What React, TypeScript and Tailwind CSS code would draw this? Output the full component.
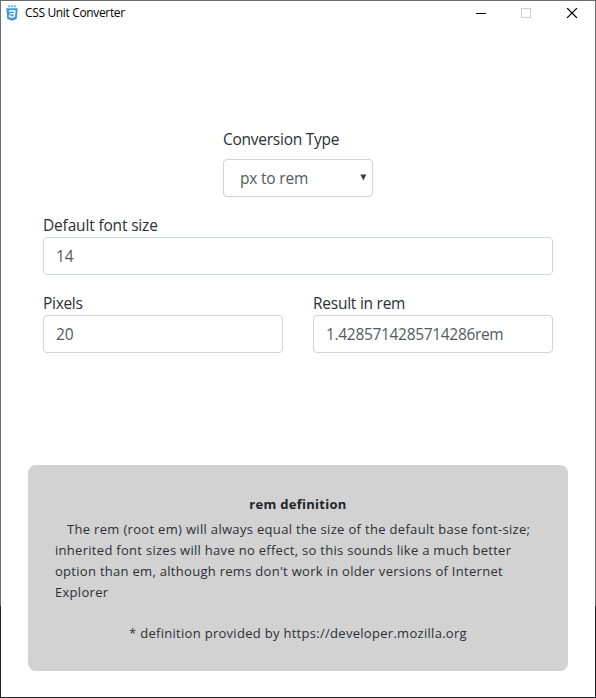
import React from "react";

const field =
  "block h-[38px] w-full rounded border border-[#ced4da] bg-white px-3 text-[15.5px] text-[#535a61] outline-none";
const label = "block h-6 text-[15.5px] leading-[25px] whitespace-nowrap";

function SideBorder() {
  return (
    <div className="flex w-px shrink-0 flex-col">
      <div className="h-[605px] bg-[#707070]" />
      <div className="flex-1 bg-[#222224]" />
    </div>
  );
}

function CssLogo() {
  return (
    <svg width="12" height="16" viewBox="0 0 12 16" className="mb-[2px] shrink-0">
      <path d="M2 0.3h2.2v2H2zM5 0.3h2.2v2H5zM8 0.3h2.2v2H8z" fill="#6cb6e4" />
      <path d="M0.3 3.2h11.4l-1 10.8L6 15.8l-4.7-1.8z" fill="#3b9bdc" />
      <path d="M3 6h5.8l-.5 5.3L6 12.3l-2.4-.9-.1-1.3M3.8 8.8h4.7" fill="none" stroke="#fff" strokeWidth="1.4" />
    </svg>
  );
}

function TitleBar() {
  return (
    <header className="flex h-[25px] items-center pl-[5px] text-black">
      <CssLogo />
      <span className="mb-[2px] ml-[7px] text-[12px] leading-4 tracking-[-0.35px] whitespace-nowrap">
        CSS Unit Converter
      </span>
      <div className="ml-auto flex pr-[16px] pb-[2px]">
        <svg width="103" height="12" viewBox="0 0 103 12" fill="none" shapeRendering="crispEdges">
          <path d="M0 6.5h10" stroke="#000" />
          <rect x="45.5" y="1.5" width="9" height="9" stroke="#ccc" />
          <path d="M91.5 1.5l9 9M100.5 1.5l-9 9" stroke="#000" strokeWidth="1.2" strokeLinecap="square" shapeRendering="auto" />
        </svg>
      </div>
    </header>
  );
}

export default function App() {
  return (
    <div className="flex h-[698px] w-[596px] flex-col overflow-hidden bg-white font-['Open_Sans',sans-serif] text-[#2c3034]">
      <div className="h-px shrink-0 bg-[#6d6a6d]" />
      <div className="flex min-h-0 flex-1">
        <SideBorder />
        <div className="flex flex-1 flex-col">
          <TitleBar />
          <main className="px-[27px] pt-[101px]">
            <form className="px-[15px]">
              <div className="mx-auto w-[150px]">
                <label className={label}>
                  <span className="tracking-[-0.25px]">Conversion Type</span>
                </label>
                <div className="mt-2 flex h-[38px] items-center justify-between rounded border border-[#ced4da] pr-[5px] pl-4 text-[15.5px] tracking-[-0.2px] text-[#535a61]">
                  <span className="pt-[2px]">px to rem</span>
                  <svg width="7" height="7" viewBox="0 0 7 7" className="mb-px">
                    <path d="M0.3 0.5h6L3.4 6.5z" fill="#343a40" />
                  </svg>
                </div>
              </div>
              <div className="mt-4">
                <label className={label}>
                  <span className="tracking-[-0.17px]">Default font size</span>
                </label>
                <input className={field} defaultValue="14" />
              </div>
              <div className="mt-4 flex gap-[30px]">
                <div className="flex-1">
                  <label className={label}>
                    <span className="tracking-[-0.3px]">Pixels</span>
                  </label>
                  <input className={field} defaultValue="20" />
                </div>
                <div className="flex-1">
                  <label className={label}>
                    <span className="tracking-[-0.25px]">Result in rem</span>
                  </label>
                  <input className={`${field} tracking-[-0.32px]`} defaultValue="1.4285714285714286rem" />
                </div>
              </div>
            </form>
            <section className="mt-28 h-[206px] w-[540px] rounded-lg bg-[#d2d2d2] px-[27px] pt-[29px] text-[13px] leading-[21px] tracking-[0.29px]">
              <h2 className="text-center font-bold text-[#212529]">rem definition</h2>
              <p className="mt-1 whitespace-nowrap">
                <span className="block pl-3 tracking-[0.32px]">The rem (root em) will always equal the size of the default base font-size;</span>
                <span className="block">inherited font sizes will have no effect, so this sounds like a much better</span>
                <span className="block">option than em, although rems don't work in older versions of Internet</span>
                <span className="block">Explorer</span>
              </p>
              <p className="mt-5 text-center">* definition provided by https://developer.mozilla.org</p>
            </section>
          </main>
        </div>
        <SideBorder />
      </div>
      <div className="h-px shrink-0 bg-[#222224]" />
    </div>
  );
}
